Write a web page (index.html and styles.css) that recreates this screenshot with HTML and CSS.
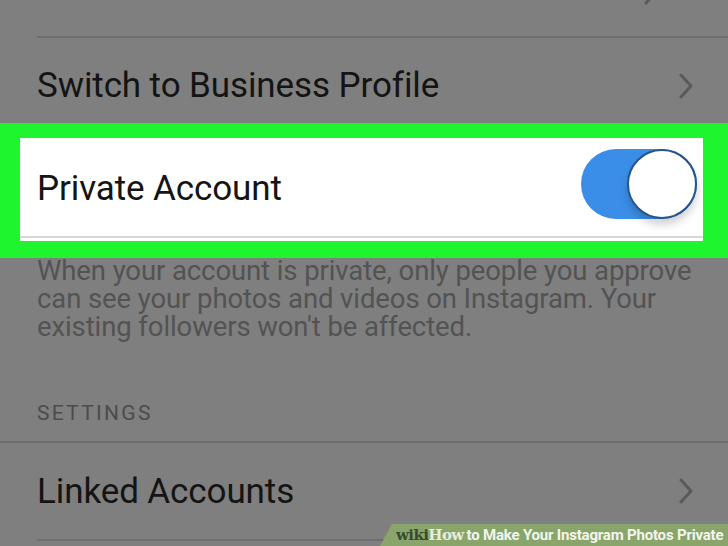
FILE: index.html
```html
<!DOCTYPE html>
<html>
<head>
<meta charset="utf-8">
<link rel="stylesheet" href="styles.css">
</head>
<body>
<div class="screen">
  <div class="top-row"><svg class="chev chev-top" viewBox="0 0 14 26"><path d="M2 2 L12 13 L2 24" fill="none" stroke="#5a5a5a" stroke-width="3" stroke-linecap="round" stroke-linejoin="round"/></svg></div>
  <div class="row biz">
    <span class="label">Switch to Business Profile</span>
    <svg class="chev" viewBox="0 0 14 26"><path d="M2 2 L12 13 L2 24" fill="none" stroke="#5a5a5a" stroke-width="3" stroke-linecap="round" stroke-linejoin="round"/></svg>
  </div>
  <div class="highlight">
    <div class="card">
      <div class="row private">
        <span class="label">Private Account</span>
        <div class="toggle"><div class="knob"></div></div>
      </div>
      <div class="card-line"></div>
    </div>
  </div>
  <p class="desc">When your account is private, only people you approve can see your photos and videos on Instagram. Your existing followers won't be affected.</p>
  <div class="section-title">SETTINGS</div>
  <div class="row linked">
    <span class="label">Linked Accounts</span>
    <svg class="chev" viewBox="0 0 14 26"><path d="M2 2 L12 13 L2 24" fill="none" stroke="#5a5a5a" stroke-width="3" stroke-linecap="round" stroke-linejoin="round"/></svg>
  </div>
  <div class="banner"><span class="wiki">wiki</span><span class="how">How</span><span class="btext"> to Make Your Instagram Photos Private</span></div>
</div>
</body>
</html>
```
FILE: styles.css
```css
* { box-sizing: border-box; }
html, body { margin: 0; padding: 0; }
body { width: 728px; height: 546px; overflow: hidden; background: #7f7f7f; font-family: Roboto, "Open Sans", sans-serif; }
.screen { position: relative; width: 728px; height: 546px; display: flex; flex-direction: column; }
.top-row { height: 38px; flex: none; margin-left: 37px; border-bottom: 2px solid #6e6e6e; position: relative; }
.chev-top { position: absolute; right: 35px; top: -21px; }
.row { display: flex; align-items: center; justify-content: space-between; padding-left: 37px; flex: none; }
.label { font-size: 35px; color: #141414; letter-spacing: -0.1px; }
.chev { width: 14px; height: 26px; margin-right: 35px; }
.biz { height: 85px; padding-top: 10px; }
.highlight { background: #1ef52f; padding: 15px 25px 17px 20px; flex: none; }
.card { background: #fff; height: 103px; display: flex; flex-direction: column; }
.private { height: 97px; padding-left: 17px; padding-right: 6px; padding-top: 4px; }
.card-line { height: 2px; background: #d6d6d6; margin-top: 1px; }
.toggle { width: 116px; height: 70px; border-radius: 35px; background: #3b8ee8; position: relative; margin-top: -10px; }
.knob { position: absolute; right: 0; top: 0; width: 70px; height: 70px; border-radius: 50%; background: #fff; border: 2px solid #27558a; box-shadow: 0 6px 8px rgba(0,0,0,0.18); }
.desc { margin: -1px 0 0 0; padding: 0 28px 0 37px; font-size: 27.5px; line-height: 28px; color: #535353; letter-spacing: -0.1px; }
.section-title { margin-top: 60px; padding-left: 37px; font-size: 21px; line-height: 24px; color: #4c4c4c; letter-spacing: 2.3px; height: 42px; border-bottom: 2px solid #6e6e6e; flex: none; }
.linked { height: 98px; border-bottom: 2px solid #6e6e6e; margin-left: 37px; padding-left: 0; }
.linked .chev { margin-right: 35px; }
.banner { position: absolute; right: 0; bottom: 0; height: 22px; width: 348px; background: #8aa56c; clip-path: polygon(12px 0, 100% 0, 100% 100%, 0 100%); display: flex; align-items: center; padding-left: 16px; white-space: nowrap; overflow: hidden; }
.wiki { font-family: "DejaVu Serif", "Liberation Serif", serif; font-weight: bold; font-size: 15px; color: #3b4a2e; letter-spacing: -0.6px; }
.how { font-family: "DejaVu Serif", "Liberation Serif", serif; font-weight: bold; font-size: 15px; color: #e6eedb; letter-spacing: -0.6px; }
.btext { font-family: Roboto, sans-serif; font-weight: bold; font-size: 15px; color: #f2f5ee; letter-spacing: -0.2px; margin-left: 3px; }
```
